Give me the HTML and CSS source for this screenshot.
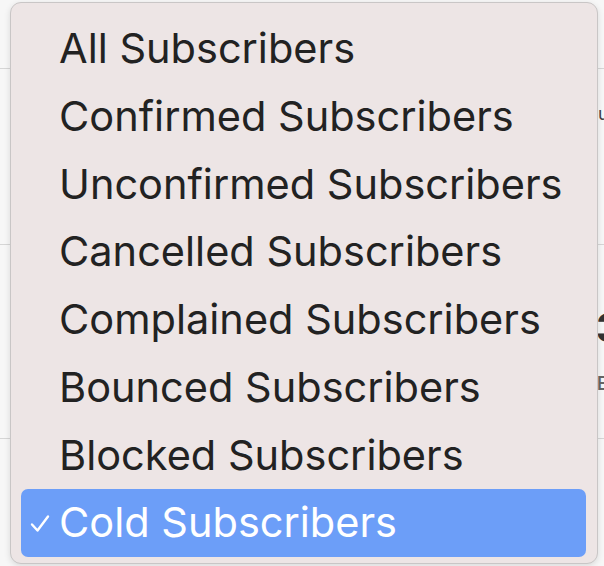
FILE: index.html
```html
<!DOCTYPE html>
<html lang="en">
<head>
    <meta charset="UTF-8">
    <meta name="viewport" content="width=device-width, initial-scale=1.0">
    <title>Subscriber filter</title>
    <link rel="stylesheet" href="styles.css">
</head>
<body>
    <div class="page">
        <div class="bg-row bg-top"><span class="bg-text">u</span></div>
        <div class="bg-row bg-mid"><span class="bg-big">3</span><span class="bg-small">E</span></div>
        <div class="bg-row bg-bottom"></div>
    </div>

    <ul class="menu">
        <li class="menu-item">All Subscribers</li>
        <li class="menu-item">Confirmed Subscribers</li>
        <li class="menu-item">Unconfirmed Subscribers</li>
        <li class="menu-item">Cancelled Subscribers</li>
        <li class="menu-item">Complained Subscribers</li>
        <li class="menu-item">Bounced Subscribers</li>
        <li class="menu-item">Blocked Subscribers</li>
        <li class="menu-item selected">
            <svg class="check" width="20" height="20" viewBox="0 0 20 20">
                <path d="M2 10.5 L7.5 16.5 L18 2.5" fill="none" stroke="#fff" stroke-width="2.4" stroke-linecap="round" stroke-linejoin="round"/>
            </svg>Cold Subscribers</li>
    </ul>
</body>
</html>
```

FILE: styles.css
```css
body {
    margin: 0;
    background: #f7f7f7;
    font-family: Inter, "Liberation Sans", sans-serif;
    height: 566px;
    overflow: hidden;
}
.page {
    padding-top: 68px;
}
.bg-row {
    border-top: 1px solid #d6d6d6;
    position: relative;
}
.bg-top {
    height: 175px;
}
.bg-mid {
    height: 193px;
}
.bg-bottom {
    height: 120px;
}
.bg-text {
    position: absolute;
    left: 598px;
    top: 34px;
    font-size: 18px;
    color: #444;
}
.bg-big {
    position: absolute;
    left: 596px;
    top: 58px;
    font-size: 40px;
    font-weight: 800;
    color: #333;
}
.bg-small {
    position: absolute;
    left: 597px;
    top: 128px;
    font-size: 18px;
    font-weight: 600;
    color: #666;
}
.menu {
    position: absolute;
    left: 10px;
    top: 2px;
    width: 565px;
    height: 548px;
    margin: 0;
    padding: 12px 11px 0 10px;
    list-style: none;
    background: #ede5e5;
    border: 1px solid #c9c6c6;
    border-radius: 11px;
    box-shadow: 0 2px 6px rgba(0, 0, 0, 0.12);
}
.menu-item {
    position: relative;
    height: 67.75px;
    line-height: 67.75px;
    padding-left: 38px;
    font-size: 41.5px;
    color: #222;
    border-radius: 7px;
}
.selected {
    background: #6c9ef8;
    color: #fff;
}
.check {
    position: absolute;
    left: 9px;
    top: 25px;
}
```
